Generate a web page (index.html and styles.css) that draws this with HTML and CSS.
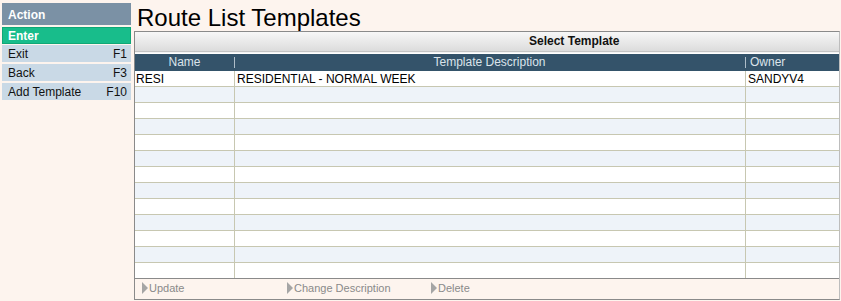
FILE: index.html
```html
<!DOCTYPE html>
<html>
<head>
<meta charset="utf-8">
<link rel="stylesheet" href="styles.css">
</head>
<body>
<div class="page">
  <div class="sidebar">
    <div class="side-head">Action</div>
    <div class="side-item enter"><span>Enter</span></div>
    <div class="side-item"><span>Exit</span><span class="key">F1</span></div>
    <div class="side-item"><span>Back</span><span class="key">F3</span></div>
    <div class="side-item"><span>Add Template</span><span class="key">F10</span></div>
  </div>
  <div class="main">
    <h1 class="title">Route List Templates</h1>
    <div class="panel">
      <div class="panel-head">Select Template</div>
      <div class="grid">
        <div class="hrow">
          <div class="hc c1">Name</div>
          <div class="hc c2"><span class="sep"></span>Template Description</div>
          <div class="hc c3"><span class="sep"></span>Owner</div>
        </div>
        <div class="rows">
          <div class="row"><div class="c c1">RESI</div><div class="c c2">RESIDENTIAL - NORMAL WEEK</div><div class="c c3">SANDYV4</div></div>
          <div class="row alt"><div class="c c1"></div><div class="c c2"></div><div class="c c3"></div></div>
          <div class="row"><div class="c c1"></div><div class="c c2"></div><div class="c c3"></div></div>
          <div class="row alt"><div class="c c1"></div><div class="c c2"></div><div class="c c3"></div></div>
          <div class="row"><div class="c c1"></div><div class="c c2"></div><div class="c c3"></div></div>
          <div class="row alt"><div class="c c1"></div><div class="c c2"></div><div class="c c3"></div></div>
          <div class="row"><div class="c c1"></div><div class="c c2"></div><div class="c c3"></div></div>
          <div class="row alt"><div class="c c1"></div><div class="c c2"></div><div class="c c3"></div></div>
          <div class="row"><div class="c c1"></div><div class="c c2"></div><div class="c c3"></div></div>
          <div class="row alt"><div class="c c1"></div><div class="c c2"></div><div class="c c3"></div></div>
          <div class="row"><div class="c c1"></div><div class="c c2"></div><div class="c c3"></div></div>
          <div class="row alt"><div class="c c1"></div><div class="c c2"></div><div class="c c3"></div></div>
          <div class="row last"><div class="c c1"></div><div class="c c2"></div><div class="c c3"></div></div>
        </div>
      </div>
      <div class="footer">
        <span class="act a1"><span class="tri"></span>Update</span>
        <span class="act a2"><span class="tri"></span>Change Description</span>
        <span class="act a3"><span class="tri"></span>Delete</span>
      </div>
    </div>
  </div>
</div>
</body>
</html>
```

FILE: styles.css
```css
html, body {
  margin: 0;
  padding: 0;
}
body {
  background: #fdf4ee;
  font-family: "Liberation Sans", Arial, sans-serif;
  font-size: 12px;
  color: #000;
  width: 841px;
  height: 301px;
  overflow: hidden;
}
.page {
  display: flex;
  padding: 3px 1px 0 2px;
  border-top: 1px solid #e4e4e4;
  box-sizing: border-box;
  margin-top: -1px;
}
.sidebar {
  width: 129px;
  flex: none;
  display: flex;
  flex-direction: column;
}
.side-head {
  height: 21px;
  padding-top: 1px;
  line-height: 22px;
  background: #7b91a5;
  color: #fff;
  font-weight: bold;
  padding-left: 6px;
  font-size: 12px;
}
.side-item {
  height: 17px;
  line-height: 19px;
  margin-top: 2px;
  background: #c9d9e6;
  display: flex;
  justify-content: space-between;
  padding: 0 4px 0 6px;
  color: #111;
  overflow: hidden;
}
.side-item.enter {
  background: #18bd8b;
  color: #fff;
  font-weight: bold;
  box-shadow: inset 0 0 0 1px #10a777;
  margin-bottom: -1px;
}
.main {
  flex: 1;
  margin-left: 3px;
  display: flex;
  flex-direction: column;
}
.title {
  margin: 0;
  height: 26px;
  padding-top: 2px;
  font-weight: normal;
  font-size: 24px;
  line-height: 26px;
  padding-left: 3px;
  color: #000;
}
.panel {
  border: 1px solid #8a8a8a;
  border-right-color: #bdbdbd;
  background: #fff;
  display: flex;
  flex-direction: column;
}
.panel-head {
  height: 19px;
  line-height: 19px;
  background: linear-gradient(#f7f7f7, #dcdcdc);
  border-bottom: 1px solid #c4c4c4;
  font-weight: bold;
  padding-left: 394px;
  color: #111;
}
.grid {
  border-top: 1px solid #f4f4f4;
}
.hrow {
  display: flex;
  height: 17px;
  line-height: 17px;
  background: #34536a;
  color: #dbe3ea;
  margin-top: 1px;
}
.c1 { width: 99px; flex: none; }
.c2 { width: 511px; flex: none; }
.c3 { flex: 1; }
.hc {
  position: relative;
  text-align: center;
}
.hc.c3 {
  text-align: left;
  padding-left: 5px;
}
.sep {
  position: absolute;
  left: 0;
  top: 3px;
  height: 11px;
  border-left: 1px solid #aebdc9;
}
.row {
  display: flex;
  height: 16px;
  line-height: 17px;
  background: #fff;
  border-bottom: 1px solid #c7c7b1;
  box-sizing: border-box;
}
.row.alt {
  background: #eef3f9;
}
.row.last {
  border-bottom: none;
  height: 15px;
}
.c {
  box-sizing: border-box;
  padding-left: 1px;
  white-space: nowrap;
}
.c.c2, .c.c3 {
  border-left: 1px solid #c7c7b1;
  padding-left: 2px;
}
.footer {
  border-top: 1px solid #8a8a8a;
  background: #fdf4ee;
  height: 18px;
  padding-bottom: 2px;
  display: flex;
  align-items: center;
  color: #8a8a8a;
  font-size: 11px;
}
.act {
  display: flex;
  align-items: center;
}
.a1 { margin-left: 7px; width: 145px; }
.a2 { width: 144px; }
.tri {
  width: 0;
  height: 0;
  border-top: 6px solid transparent;
  border-bottom: 6px solid transparent;
  border-left: 6px solid #a5a5a5;
  margin-right: 1px;
}
```
